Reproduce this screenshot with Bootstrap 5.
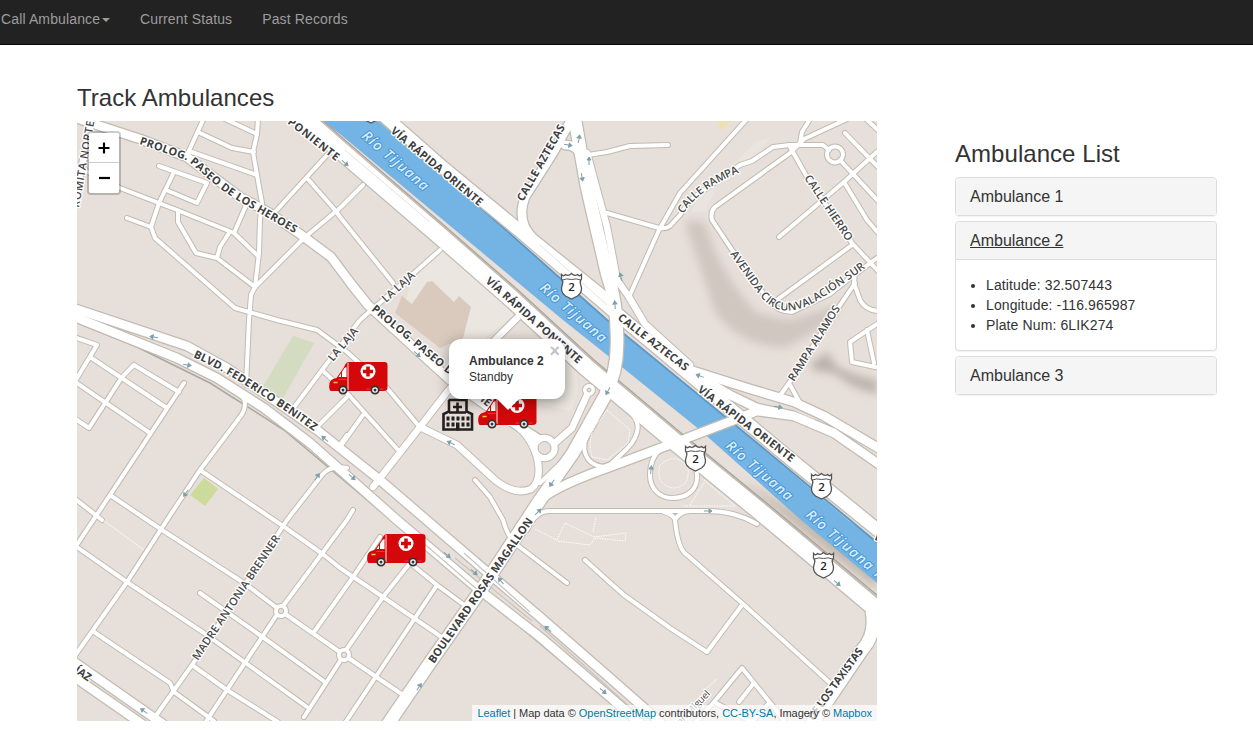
<!DOCTYPE html>
<html lang="en">
<head>
<meta charset="utf-8">
<meta name="viewport" content="width=device-width, initial-scale=1">
<title>Track Ambulances</title>
<link href="https://cdn.jsdelivr.net/npm/bootstrap@5.3.0/dist/css/bootstrap.min.css" rel="stylesheet">
<style>
body{font-family:"Liberation Sans",Arial,sans-serif;font-size:14px;line-height:20px;color:#333;background:#fff;overflow:hidden}
.topbar{height:45px;background:#222;border-bottom:1px solid #080808;padding:9px 0 0 1px;align-items:flex-start;gap:30px}
.topbar .nav-link{color:#9d9d9d;padding:0;line-height:20px;letter-spacing:.13px}
.topbar .dropdown-toggle::after{border-top:4px solid;border-left:4px solid transparent;border-right:4px solid transparent;margin-left:2px;vertical-align:2px}
h3{font-size:24px;line-height:26px;font-weight:400;margin:0;letter-spacing:.05px}
.map-col{width:800px;margin-left:77px;padding-top:40px}
.side-col{width:262px;margin-left:78px;padding-top:96px}
.map-box{width:800px;height:600px;margin-top:10px;background:#e7dfd9}
.panels{padding-top:10px}
.panel-card{--bs-card-border-color:#ddd;--bs-card-border-radius:4px;box-shadow:0 1px 1px rgba(0,0,0,.05);color:#333;margin-bottom:5px}
.panel-card .card-header{background:#f5f5f5;padding:10px 14px;font-size:16px;line-height:17px;border-color:#ddd}
.panel-card .card-header:last-child{border-bottom:0}
.panel-card a{color:#333;text-decoration:none}
.panel-card a.active{text-decoration:underline}
.panel-card .card-body{padding:15px}
.panel-card ul{margin:0;padding-left:15px;letter-spacing:.12px}
.zoom-ctl{left:10px;top:10px;border:2px solid rgba(0,0,0,.2);border-radius:4px;background-clip:padding-box}
.zoom-ctl button{width:30px;height:30px;border:0;background:#fff;display:block;padding:0}
.zoom-ctl button:first-child{border-bottom:1px solid #ccc;border-radius:2px 2px 0 0}
.zoom-ctl button:last-child{border-radius:0 0 2px 2px}
.credit{right:0;bottom:0;height:16px;padding:0 5px;background:rgba(255,255,255,.7);font-size:11px;line-height:16px;letter-spacing:-.035px;white-space:nowrap}
.credit a{color:#0078a8;text-decoration:none}
.bubble{left:372px;top:218px;width:116px;height:60px;border-radius:12px;background:#fff;box-shadow:0 3px 14px rgba(0,0,0,.4);padding:14px 0 0 20px;font-size:12px;line-height:16px}
.bubble .x-close{right:5px;top:5px;font:bold 18px/14px "Liberation Sans",sans-serif;color:#c3c3c3}
.bubble::after{content:"";position:absolute;left:48px;top:60px;border:11px solid transparent;border-top-color:#fff;border-bottom:0}
.case{stroke:#c1bbb3}.fill-r{stroke:#fff}
.r,.r *{fill:none;stroke-linejoin:round;stroke-linecap:round}
.lbl{font-family:"Open Sans","Noto Sans",sans-serif;font-size:11px;font-weight:700;fill:#3f3f3f;stroke:#fff;stroke-width:2.6px;stroke-linejoin:round;paint-order:stroke}
.thin{font-weight:600;fill:#4a4a4a}
.riv{font-style:italic;font-weight:600;font-size:14px;stroke:#4795d6;stroke-width:2px;fill:#d8edfc}
</style>
</head>
<body>
<nav class="topbar d-flex">
  <a class="nav-link dropdown-toggle" href="#">Call Ambulance</a>
  <a class="nav-link" href="#">Current Status</a>
  <a class="nav-link" href="#">Past Records</a>
</nav>
<main class="d-flex align-items-start">
<section class="map-col flex-shrink-0">
<h3>Track Ambulances</h3>
<div class="map-box position-relative overflow-hidden">
<svg class="d-block" width="800" height="600" viewBox="77 121 800 600">
<defs>
<filter id="soft" x="-20%" y="-20%" width="140%" height="140%"><feGaussianBlur stdDeviation="4"/></filter>
<g id="minor">
<path d="M204 118L187 155M200 133L232 148L254 152M225 119L257 134M258 118L257 134L253 152L257 175L262 203L260 220L259 253L255 287L251 295L249 320L246 385"/>
<path d="M189 151L257 175M159 166L207 183L197 203L166 190M174 172L159 203L151 227L155 238L235 308L277 320L317 330L347 352L387 388L418 425"/>
<path d="M74 165L120 188L177 210L234 233L257 255M127 218L151 227M178 212V222L196 253L217 258L255 287M229 233L220 247L217 258M234 233L247 203M275 212L327 155"/>
<path d="M255 287L304 238L340 208L363 185M307 178L335 210L340 217L393 283M440 250L413 274L360 320L322 370L292 410M322 370L337 384"/>
<path d="M588 155L607 152L630 146L668 145M603 213L607 213L659 228Q666 229 670 226L680 215L690 200L740 165L752 161L773 147L790 145L823 145L829 150M747 119L680 193L659 230L629 297"/>
<path d="M847 119L804 139L790 153L715 207Q710 212 712 220L734 253L768 300Q778 312 792 312L830 294L850 278L877 258M810 119L802 132L800 143"/>
<path d="M789 145L807 177L852 243L865 257L880 273M779 237L844 182L880 149M840 160L880 203M844 182L867 220L880 235M845 133L880 169M866 119L880 132M774 302L852 245M855 272L854 283L860 300Q866 311 880 311M855 283L830 320L789 383L779 397M789 383L800 403M880 322L850 342L852 362L880 368M867 330L874 363"/>
<path d="M347 397L317 427M347 393L398 450M363 415L340 447M347 435L340 445M540 483L567 457M475 480L490 497L503 520Q508 538 517 545L567 583M585 560L607 580L624 595L670 628L707 652L742 605M675 520Q678 550 687 555L742 603L830 683M527 530Q535 511 550 511L707 511Q735 511 757 524M664 512Q674 515 675 520Q679 512 690 511"/>
<path d="M670 445C653 450 650 465 650 475C650 490 661 498 672 498C687 498 698 490 697 475L695 460M617 400C634 412 640 422 637 432C634 445 625 450 607 468M590 430C580 445 582 466 607 467M683 736L714 702L742 668L784 720M754 683L739 702M714 702L760 726M769 703L750 724"/>
<path d="M74 337L97 345L74 383M90 357L167 408M134 365L179 392M134 365L122 377L89 428L74 418M74 381L150 433M184 383L110 495L74 549M224 383Q244 393 245 403Q245 411 240 417L200 470L167 520L127 582L74 657M200 470L283 526L324 555L340 568L383 597L443 638M347 468Q330 465 322 475L287 520L192 665L155 717M74 498L102 520M110 495L162 530L244 583L281 611L344 655L403 695M74 545L127 582L204 633L307 707M200 593L264 638L325 682M94 632L170 683L174 692L214 721M192 665L227 690L278 722"/>
<path d="M353 510L347 520L280 610L205 723M380 537L353 577L314 632M344 655L304 717M410 563L383 597L344 653M437 585L377 675L345 723M400 555L437 585L467 607"/>
<circle cx="835" cy="154.500" r="8"/><circle cx="589" cy="390" r="4"/><circle cx="281" cy="611" r="5"/><circle cx="344" cy="655" r="5"/>
</g>
<g id="mid">
<path d="M92 117L75 200M517 318L485 350L447 392L420 427L373 487M420 427L457 445L495 480Q515 496 531 489Q541 482 538 462Q533 437 513 423M587 395L572 428L555 443M587 153L607 227L617 280L629 297L645 324L690 365"/><circle cx="544.500" cy="448" r="10"/>
</g>
<g id="large">
<path d="M70 116L97 125L140 139L187 157L212 176L240 197L268 212L300 234L331 257L352 285L368 305L417 350L450 380L490 408L540 440"/>
<path d="M571 120L553 153L525 197Q516 222 533 238L610 300M565 145Q578 145 582 158M687 369L747 388L794 402L824 416L880 449M690 372L730 395L757 408L794 416L834 433L880 465M538 502Q553 487 607 468L674 443L734 420L757 411L794 416"/>
<path d="M70 307L187 346L227 368L277 402L317 430L380 480L480 566L540 617L610 678L660 722M70 315L177 358L217 378L264 408L310 443L397 520L477 588L540 637L610 697L640 723"/>
<path d="M70 659L163 724M70 674L142 724"/>
</g>
<g id="main">
<path d="M574 115L587 187L607 273Q618 305 617 345Q617 372 605 396L573 453L540 500L483 587L427 667L386 727M872 612Q876 635 862 650L809 728M382 114L440 165L520 231L610 308L690 375L794 462L885 536"/>
</g>
<g id="huge"><path d="M298 113L340 150L440 236L513 300L587 368L674 441L762 513L880 612"/></g>
<g id="shield"><path d="M-10-11.500Q-8-9-6-11.500Q-3-9.500 0-12.500Q3-9.500 6-11.500Q8-9 10-11.500V-7Q8-5 9-2Q12 6 6 10L0 13L-6 10Q-12 6-9-2Q-8-5-10-7Z" fill="#fff" stroke="#555" stroke-width="1.300"/><path d="M-9-6Q-5-8 0-6.500Q5-8 9-6" fill="none" stroke="#555"/><text y="4.500" text-anchor="middle" font-family="Open Sans,sans-serif" font-size="11.500" fill="#222" font-weight="600">2</text></g>
<g id="arr" stroke="#7f9faa" stroke-width="1" fill="#7f9faa"><path d="M-4 0H2"/><path d="M1-2L4 0L1 2Z"/></g>
<g id="van">
<path d="M16 2Q17 0 20 0H55Q58 0 58 3V26Q58 29 54 29H1Q-1 27 0 21Q1 17 7 16L14 6Z" fill="#d4080a"/>
<path d="M9 15L15 6L17 5V15Z" fill="#fff"/><path d="M12 15V10" stroke="#d4080a"/><path d="M18.500 1V28" stroke="#fff" stroke-width=".9"/><path d="M9 17.500H17M37 27H54" stroke="#f05a50" stroke-width=".6"/><path d="M4 20.500H8" stroke="#ffcf40" stroke-width="1.500"/>
<circle cx="38.500" cy="9.500" r="7.500" fill="#fff"/><path d="M38.500 4.500V14.500M33.500 9.500H43.500" stroke="#d4080a" stroke-width="3.600"/>
<g fill="#fff" stroke="#333" stroke-width="1.800"><circle cx="13.500" cy="28" r="3.700"/><circle cx="45.500" cy="28" r="3.700"/></g><circle cx="13.500" cy="28" r="1.500" fill="#333"/><circle cx="45.500" cy="28" r="1.500" fill="#333"/>
</g>
<path id="t1" d="M139 144L186 160Q196 167 206 177Q222 191 240 202L296 234"/>
<path id="t2" d="M287 123L338 163"/><path id="t3" d="M390 132L482 209"/>
<path id="t4" d="M523 202L566 126"/><path id="t5" d="M485 282L580 366"/>
<path id="t6" d="M617 319L687 373"/><path id="t7" d="M697 391L793 464"/>
<path id="t8" d="M193 357Q222 370 253 390Q285 410 315 432"/><path id="t9" d="M434 664L534 520"/>
<path id="t10" d="M198 661L282 536"/><path id="t11" d="M683 214Q700 188 741 172"/>
<path id="t12" d="M804 178L848 243"/><path id="t13" d="M730 254L757 292C772 313 790 316 815 302Q840 287 875 261"/>
<path id="t14" d="M794 382L842 306"/><path id="t15" d="M371 310L520 434"/>
</defs>
<path d="M441 248L416 272L405 300L470 350L520 310ZM540 345L520 400L570 411Q582 395 575 365Z" fill="#ebe6df"/>
<path d="M427 282L432 281L454 302L459 296L471 307L463 338L440 348L395 313L402 296L412 304Z" fill="#d9cabd"/>
<path d="M293 336L314 343L282 400L262 388Z" fill="#d3dcc0"/><path d="M204 478L218 489L205 506L190 495Z" fill="#ccdb9c"/>
<path d="M716 121H730L722 130Z" fill="#eee0b0"/><path d="M770 138L755 142L738 160L700 192L692 212H705L720 180L752 160Z" fill="#e9e4de"/>
<g filter="url(#soft)"><path d="M685 224Q693 216 705 224L714 248Q730 285 757 313L790 320L840 304L828 325L785 348Q740 346 715 312Z" fill="#cfc7c0"/><path d="M812 362L828 352L836 366Q855 376 877 380V394Q850 388 836 374L812 370Z" fill="#bbb3ac"/><path d="M740 480L830 530L877 572V590L800 530Z" fill="#c3b9af"/></g>
<path d="M322 121H378L490 217L607 321L740 430L849 521L877 542V583L801 520L700 430L607 355L563 320L340 134Z" fill="#73b4e5"/>
<path d="M380 121L490 216L607 320L740 429L880 545" fill="none" stroke="#5c98c5" stroke-width="2"/>
<path d="M77 323L137 347L210 383L284 430L347 483L397 525L500 610L610 702L630 720" fill="none" stroke="#aaa7a3" stroke-width="1.500"/>
<g class="r case"><use href="#minor" stroke-width="6"/><use href="#mid" stroke-width="8.500"/><use href="#large" stroke-width="11"/><use href="#main" stroke-width="15"/><use href="#huge" stroke-width="19.500"/></g>
<path d="M305 105L347 142L447 228L520 292L594 360L681 433L769 505L885 602" fill="none" stroke="#aba59d" stroke-width="1.500"/>
<g class="r fill-r"><use href="#minor" stroke-width="4"/><use href="#mid" stroke-width="6.500"/><use href="#large" stroke-width="8.500"/><use href="#main" stroke-width="12.500"/><use href="#huge" stroke-width="17"/></g>
<g fill="#e7dfd9" stroke="#c1bbb3"><circle cx="281" cy="611" r="2.800"/><circle cx="344" cy="655" r="2.800"/><circle cx="589" cy="390" r="2"/><circle cx="544.500" cy="448" r="6.500"/></g>
<path d="M413 534L480 592M455 558L532 621M464 553L530 612M540 626L640 716" fill="none" stroke="#c9c5bf" stroke-width="1.200"/>
<path d="M345 150L430 222M540 245L607 305M795 410L815 420" fill="none" stroke="#e6e3df" stroke-width="1"/>
<path d="M607 410L630 430L628 443L607 460L592 457Q586 435 600 420ZM660 465Q676 451 688 468Q690 487 673 488Q655 485 660 465M704 483L690 505M704 480L735 506H684M535 529L557 540L565 523L594 537L626 533L625 541L595 538L590 545L557 541M593 532L596 517" fill="none" stroke="#fff" stroke-width="1" stroke-dasharray="1.500 1"/>
<path d="M103 520L144 550M707 688L717 679" stroke="#f8f5f2" stroke-width="1"/>
<g><use href="#arr" transform="translate(345 163) rotate(40)"/><use href="#arr" transform="translate(154 337) rotate(190)"/><use href="#arr" transform="translate(187 365) rotate(10)"/><use href="#arr" transform="translate(579 139) rotate(-80)"/><use href="#arr" transform="translate(568 145) rotate(10)"/><use href="#arr" transform="translate(589 161) rotate(-90)"/><use href="#arr" transform="translate(582 177) rotate(80)"/><use href="#arr" transform="translate(621 277) rotate(-105)"/><use href="#arr" transform="translate(615 305) rotate(-95)"/><use href="#arr" transform="translate(608 391) rotate(120)"/><use href="#arr" transform="translate(700 376) rotate(200)"/><use href="#arr" transform="translate(778 407) rotate(10)"/><use href="#arr" transform="translate(451 443) rotate(205)"/><use href="#arr" transform="translate(417 354) rotate(40)"/><use href="#arr" transform="translate(325 439) rotate(220)"/><use href="#arr" transform="translate(352 477) rotate(40)"/><use href="#arr" transform="translate(317 477) rotate(-55)"/><use href="#arr" transform="translate(186 493) rotate(125)"/><use href="#arr" transform="translate(552 483) rotate(125)"/><use href="#arr" transform="translate(538 512) rotate(-45)"/><use href="#arr" transform="translate(651 470) rotate(-85)"/><use href="#arr" transform="translate(708 511)"/><use href="#arr" transform="translate(447 555) rotate(40)"/><use href="#arr" transform="translate(474 572) rotate(40)"/><use href="#arr" transform="translate(501 581) rotate(230)"/><use href="#arr" transform="translate(548 629) rotate(220)"/><use href="#arr" transform="translate(603 691) rotate(40)"/><use href="#arr" transform="translate(419 687) rotate(-55)"/><use href="#arr" transform="translate(144 711) rotate(215)"/><use href="#arr" transform="translate(837 583) rotate(40)"/></g>
<g class="lbl">
<text><textPath href="#t1" textLength="181">PROLOG. PASEO DE LOS HEROES</textPath></text>
<text><textPath href="#t2" textLength="62">PONIENTE</textPath></text>
<text><textPath href="#t3" textLength="116">VÍA RÁPIDA ORIENTE</textPath></text>
<text><textPath href="#t4" textLength="86">CALLE AZTECAS</textPath></text>
<text><textPath href="#t5" textLength="124">VÍA RÁPIDA PONIENTE</textPath></text>
<text><textPath href="#t6" textLength="86">CALLE AZTECAS</textPath></text>
<text><textPath href="#t7" textLength="118">VÍA RÁPIDA ORIENTE</textPath></text>
<text><textPath href="#t8" textLength="142">BLVD. FEDERICO BENITEZ</textPath></text>
<text><textPath href="#t9" textLength="174">BOULEVARD ROSAS MAGALLON</textPath></text>
<text><textPath href="#t15" textLength="181">PROLOG. PASEO DE LOS HEROES</textPath></text>
<text transform="translate(67 667) rotate(35)">DÍAZ</text>
<text transform="translate(813 721) rotate(-54)" textLength="86">DE LOS TAXISTAS</text>
<text transform="translate(873 538) rotate(40)">VÍA</text>
</g>
<g class="lbl thin">
<text><textPath href="#t10" textLength="148">MADRE ANTONIA BRENNER</textPath></text>
<text><textPath href="#t11" textLength="71">CALLE RAMPA</textPath></text>
<text><textPath href="#t12" textLength="77">CALLE HIERRO</textPath></text>
<text><textPath href="#t13" textLength="174">AVENIDA CIRCUNVALACIÓN SUR</textPath></text>
<text><textPath href="#t14" textLength="87">RAMPA ALAMOS</textPath></text>
<text transform="translate(386 303) rotate(-42)" textLength="40">LA LAJA</text>
<text transform="translate(333 362) rotate(-50)" textLength="40">LA LAJA</text>
<text transform="translate(79 208) rotate(-80)" textLength="88">ROMITA NORTE</text>
<text transform="translate(677 729) rotate(-46)" style="font-size:9.500px;font-weight:400">San Miguel</text>
</g>
<g class="lbl riv">
<text transform="translate(361 137) rotate(41)" textLength="83">Río Tijuana</text>
<text transform="translate(539 289) rotate(41)" textLength="83">Río Tijuana</text>
<text transform="translate(725 447) rotate(41)" textLength="83">Río Tijuana</text>
<text transform="translate(805 516) rotate(41)" textLength="113">Río Tijuana Río</text>
</g>
<use href="#shield" x="571.500" y="286"/><use href="#shield" x="695.500" y="458"/><use href="#shield" x="821.500" y="486"/><use href="#shield" x="823.500" y="565"/><use href="#shield" x="371" y="110"/>
<use href="#van" x="329.500" y="362"/><use href="#van" x="478.500" y="396"/><use href="#van" x="367.500" y="534"/>
<path d="M448.500 400H466.500V411.500L472 414V429.500H443.500V414L449 411.500V400" fill="#e7dfd9" stroke="#231f20" stroke-width="2.600"/>
<path d="M449 412.500H466M457.500 402.500V411.500M453 407H462" stroke="#231f20" stroke-width="2.600"/>
<path d="M446.500 416.500h3v4h-3zM451.500 416.500h3v4h-3zM456.500 416.500h3v4h-3zM461.500 416.500h3v4h-3zM466.500 416.500h3v4h-3zM446.500 422.500h3v4h-3zM451.500 422.500h3v4h-3zM456 422.500h3.500v8h-3.500zM461.500 422.500h3v4h-3zM466.500 422.500h3v4h-3z" fill="#231f20"/>
</svg>
<div class="zoom-ctl position-absolute">
<button type="button" aria-label="Zoom in"><svg width="14" height="14" viewBox="0 0 14 14" class="d-block mx-auto"><path d="M7 1.500V12.500M1.500 7H12.500" stroke="#000" stroke-width="2.200"/></svg></button>
<button type="button" aria-label="Zoom out"><svg width="14" height="14" viewBox="0 0 14 14" class="d-block mx-auto"><path d="M2 7H13" stroke="#000" stroke-width="2.200"/></svg></button>
</div>
<div class="bubble position-absolute"><span class="x-close position-absolute">×</span><b>Ambulance 2</b><br>Standby</div>
<div class="credit position-absolute"><a href="#">Leaflet</a> | Map data © <a href="#">OpenStreetMap</a> contributors, <a href="#">CC-BY-SA</a>, Imagery © <a href="#">Mapbox</a></div>
</div>
</section>
<aside class="side-col flex-shrink-0">
<h3>Ambulance List</h3>
<div class="panels">
<div class="card panel-card"><div class="card-header"><a href="#">Ambulance 1</a></div></div>
<div class="card panel-card"><div class="card-header"><a class="active" href="#">Ambulance 2</a></div>
<div class="card-body"><ul><li>Latitude: 32.507443</li><li>Longitude: -116.965987</li><li>Plate Num: 6LIK274</li></ul></div></div>
<div class="card panel-card"><div class="card-header"><a href="#">Ambulance 3</a></div></div>
</div>
</aside>
</main>
<script src="https://cdn.jsdelivr.net/npm/bootstrap@5.3.0/dist/js/bootstrap.bundle.min.js"></script>
</body>
</html>
